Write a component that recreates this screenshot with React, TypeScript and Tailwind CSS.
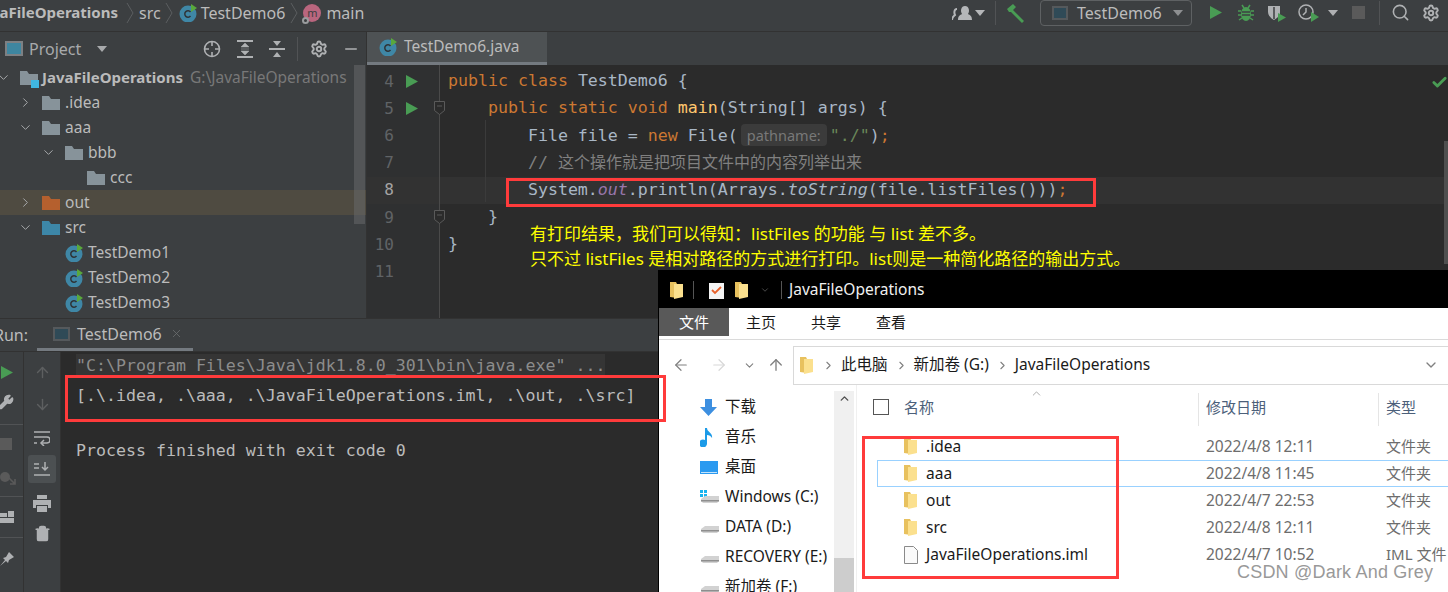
import { ArrowDown, ArrowLeft, ArrowRight, ArrowUp, Check, ChevronDown, ChevronRight, ChevronUp, Minus, Search, Settings, Trash2, Wrench, X } from "lucide-react"
import type { ReactNode } from "react"

const ui = "font-['Noto_Sans','Noto_Sans_CJK_SC',sans-serif]"
const mono = "font-['DejaVu_Sans_Mono','Noto_Sans_CJK_SC',monospace]"

function IdeFolder({ color = "#87939a" }: { color?: string }) {
  return (
    <svg width="18" height="15" viewBox="0 0 18 15" className="shrink-0">
      <path d="M0 1h7l2 3h9v11H0z" fill={color} />
    </svg>
  )
}

function ClassIcon() {
  return (
    <svg width="18" height="18" viewBox="0 0 18 18" className="shrink-0">
      <circle cx="9" cy="10" r="8.5" fill="#3f87a6" />
      <path d="M11.5 8a3.2 3.2 0 1 0 0 4" fill="none" stroke="#2f3437" strokeWidth="1.5" />
      <path d="M12 0l6 4-6 4z" fill="#59a83c" />
    </svg>
  )
}

function WinFolder() {
  return (
    <svg width="13" height="17" viewBox="0 0 13 17" className="shrink-0">
      <path d="M0 0h6l1 2v14l-7-1z" fill="#e8c15e" />
      <path d="M4 2h9v13l-9 2z" fill="#fbe08e" />
    </svg>
  )
}

function Drive({ showWin }: { showWin?: boolean }) {
  return (
    <svg width="20" height="16" viewBox="0 0 20 16" className="shrink-0">
      {showWin && <path d="M0 1h3v3H0zM4 1h3v3H4zM0 5h3v3H0zM4 5h3v3H4z" fill="#19b4f0" />}
      <path d="M1 10l4-3h14v5l-2 2H3l-2-2z" fill="#d2d2d2" />
      <path d="M1 11h18v1.5H1z" fill="#8e8e8e" />
    </svg>
  )
}

function RunIcon({ className = "" }: { className?: string }) {
  return (
    <svg width="14" height="15" viewBox="0 0 14 15" className={`shrink-0 ${className}`}>
      <path d="M1 1l12 6.5L1 14z" fill="#499c54" />
    </svg>
  )
}

function Caret({ color, className = "" }: { color: string; className?: string }) {
  return (
    <svg width="10" height="6" viewBox="0 0 10 6" className={`shrink-0 ${className}`}>
      <path d="M0 0h10L5 6z" fill={color} />
    </svg>
  )
}

function Crumb() {
  return (
    <svg width="9" height="22" viewBox="0 0 9 22" className="mx-[4.5px] shrink-0">
      <path d="M1 1l6 10-6 10" fill="none" stroke="#5b5e60" strokeWidth="1" />
    </svg>
  )
}

function Tree({ indent, arrow, name, icon, active }: {
  indent: string
  arrow?: "right" | "down"
  name: string
  icon: ReactNode
  active?: boolean
}) {
  return (
    <div className={`flex h-[25px] items-center ${indent} ${active ? "bg-[#4f4b41]" : ""}`}>
      <span className="flex w-[20px] shrink-0 text-[#a7a9ab]">
        {arrow === "right" && <ChevronRight size={15} strokeWidth={1.6} className="-ml-[4px]" />}
        {arrow === "down" && <ChevronDown size={15} strokeWidth={1.6} className="-ml-[4px]" />}
      </span>
      <span className="flex w-[23px] shrink-0">{icon}</span>
      <span className="whitespace-nowrap text-[#bbbbbb]">{name}</span>
    </div>
  )
}

function TopBar() {
  return (
    <header className={`flex h-[32px] shrink-0 items-center border-b border-[#323232] bg-[#3c3f41] pb-[6px] text-[16px] text-[#bbbbbb] ${ui}`}>
      <div className="flex flex-1 items-center overflow-hidden">
        <span className="-ml-[23px] mr-[3px] text-[15px] font-bold">JavaFileOperations</span>
        <Crumb />
        <span>src</span>
        <Crumb />
        <ClassIcon />
        <span className="ml-[4px]">TestDemo6</span>
        <Crumb />
        <span className="relative flex h-[18px] w-[18px] items-center justify-center rounded-full bg-[#b9667e] text-[11px] leading-none text-[#3c3f41]">
          m
          <span className="absolute -bottom-[2px] -left-[1px] h-[7px] w-[7px] rounded-full border-2 border-[#9a9c9e] bg-[#3c3f41]" />
        </span>
        <span className="ml-[5px]">main</span>
      </div>
      <div className="flex h-full items-center pr-[8px]">
        <svg width="21" height="16" viewBox="0 0 21 16" className="mr-[2px]">
          <path d="M0 15c0-3 2-4 3-5-1-2-1-6 2-6" fill="none" stroke="#b5b7b9" strokeWidth="2" />
          <path d="M6 15c0-4 2-5 4-6-2-3-1-8 3-8s5 5 3 8c2 1 4 2 4 6z" fill="#b5b7b9" />
        </svg>
        <Caret color="#b5b7b9" />
        <div className="ml-[10px] h-[24px] w-px bg-[#515355]" />
        <svg width="20" height="20" viewBox="0 0 20 20" className="ml-[10px]">
          <path d="M1 6l6-5 3 3-3 3 11 11-2 2L5 9 3 9z" fill="#499c54" />
        </svg>
        <div className="ml-[14px] flex h-[26px] w-[152px] items-center rounded-[4px] border border-[#5e6163] pl-[11px]">
          <span className="h-[14px] w-[16px] shrink-0 border-2 border-[#55595c] bg-[#2f4a57]" />
          <span className="ml-[9px]">TestDemo6</span>
          <Caret color="#8d8f91" className="ml-[11px]" />
        </div>
        <RunIcon className="ml-[17px]" />
        <svg width="16" height="18" viewBox="0 0 16 18" className="ml-[15px]">
          <ellipse cx="8" cy="10" rx="5" ry="7" fill="#499c54" />
          <path d="M4 1l2 3M12 1l-2 3M0 7h3M13 7h3M0 11h3M13 11h3M1 16l3-2M15 16l-3-2" stroke="#499c54" strokeWidth="1.5" />
          <path d="M4 8h8M4 11h8" stroke="#3c3f41" strokeWidth="1.4" />
        </svg>
        <svg width="20" height="18" viewBox="0 0 20 18" className="ml-[13px]">
          <path d="M1 2h12v6c0 4-3 6-6 8-3-2-6-4-6-8z" fill="#afb1b3" />
          <path d="M7 3v12" stroke="#3c3f41" strokeWidth="1.5" />
          <path d="M11 9l8 4.5-8 4.5z" fill="#499c54" />
        </svg>
        <svg width="22" height="20" viewBox="0 0 22 20" className="ml-[11px]">
          <circle cx="8" cy="9" r="7" fill="none" stroke="#afb1b3" strokeWidth="1.5" />
          <path d="M8 5v4l-3 3" fill="none" stroke="#afb1b3" strokeWidth="1.5" />
          <path d="M13 9l8 5-8 5z" fill="#499c54" />
        </svg>
        <Caret color="#afb1b3" className="ml-[8px]" />
        <div className="ml-[14px] h-[13px] w-[13px] bg-[#5a5a5a]" />
        <div className="ml-[14px] h-[24px] w-px bg-[#515355]" />
        <Search size={19} strokeWidth={2} className="ml-[11px] text-[#afb1b3]" />
        <Settings size={18} strokeWidth={2.6} className="ml-[12px] text-[#afb1b3]" />
      </div>
    </header>
  )
}

function ProjectPanel() {
  return (
    <aside className={`relative flex w-[367px] shrink-0 flex-col overflow-hidden border-r border-[#323232] bg-[#3c3f41] text-[15.5px] ${ui}`}>
      <div className="flex h-[33px] shrink-0 items-center text-[16px] text-[#a8aaac]">
        <span className="ml-[5px] h-[15px] w-[18px] shrink-0 border-2 border-[#7d8083] bg-[#3e86a0]" />
        <span className="ml-[6px]">Project</span>
        <Caret color="#a8aaac" className="ml-[16px]" />
        <svg width="18" height="18" viewBox="0 0 18 18" className="ml-[96px] shrink-0">
          <circle cx="9" cy="9" r="7.5" fill="none" stroke="#afb1b3" strokeWidth="1.6" />
          <path d="M9 1v5M9 12v5M1 9h5M12 9h5" stroke="#afb1b3" strokeWidth="1.6" />
        </svg>
        <svg width="16" height="18" viewBox="0 0 16 18" className="ml-[16px] shrink-0">
          <path d="M0 1h16M0 17h16" stroke="#afb1b3" strokeWidth="2" />
          <path d="M8 3l4 4H4zM8 15l-4-4h8zM4 9h8" fill="#afb1b3" stroke="#afb1b3" strokeWidth="0.5" />
        </svg>
        <svg width="16" height="18" viewBox="0 0 16 18" className="ml-[16px] shrink-0">
          <path d="M0 9h16" stroke="#afb1b3" strokeWidth="2" />
          <path d="M4 1h8L8 6zM4 17h8l-4-5z" fill="#afb1b3" />
        </svg>
        <div className="ml-[12px] h-[24px] w-px shrink-0 bg-[#515355]" />
        <Settings size={18} strokeWidth={2.6} className="ml-[12px] shrink-0 text-[#afb1b3]" />
        <Minus size={18} strokeWidth={2} className="ml-[14px] shrink-0 text-[#afb1b3]" />
      </div>
      <div className="flex h-[25px] items-center">
        <span className="flex w-[20px] shrink-0 text-[#a7a9ab]"><ChevronDown size={15} strokeWidth={1.6} className="-ml-[4px]" /></span>
        <span className="relative flex w-[22px] shrink-0">
          <IdeFolder />
          <span className="absolute -bottom-[3px] right-[3px] h-[8px] w-[8px] bg-[#40b6e0]" />
        </span>
        <span className="whitespace-nowrap text-[15px] font-bold text-[#bbbbbb]">JavaFileOperations</span>
        <span className="ml-[7px] whitespace-nowrap text-[#787878]">G:\JavaFileOperations</span>
      </div>
      <Tree indent="pl-[22px]" arrow="right" name=".idea" icon={<IdeFolder />} />
      <Tree indent="pl-[22px]" arrow="down" name="aaa" icon={<IdeFolder />} />
      <Tree indent="pl-[45px]" arrow="down" name="bbb" icon={<IdeFolder />} />
      <Tree indent="pl-[67px]" name="ccc" icon={<IdeFolder />} />
      <Tree indent="pl-[22px]" arrow="right" name="out" icon={<IdeFolder color="#b5602e" />} active />
      <Tree indent="pl-[22px]" arrow="down" name="src" icon={<IdeFolder color="#3d87a8" />} />
      <Tree indent="pl-[45px]" name="TestDemo1" icon={<ClassIcon />} />
      <Tree indent="pl-[45px]" name="TestDemo2" icon={<ClassIcon />} />
      <Tree indent="pl-[45px]" name="TestDemo3" icon={<ClassIcon />} />
      <div className="absolute right-[1px] top-[33px] h-[159px] w-[11px] bg-[#6a6c6d]/50" />
    </aside>
  )
}

function Line({ n, run, fold, current, children }: { n: number; run?: boolean; fold?: boolean; current?: boolean; children?: ReactNode }) {
  return (
    <div className={`flex h-[27.2px] items-center ${current ? "bg-[#323232]" : ""}`}>
      <div className={`relative flex h-full w-[73px] shrink-0 items-center border-r border-[#4a4a4a] ${current ? "bg-[#323232]" : "bg-[#2f3031]"}`}>
        <span className={`w-[27px] text-right ${current ? "text-[#a4a3a3]" : "text-[#606366]"}`}>{n}</span>
        {run && <RunIcon className="ml-[11px]" />}
        {fold && (
          <svg width="11" height="15" viewBox="0 0 11 15" className="absolute -right-[6px] top-[6px]">
            <path d="M.5.5h10v9l-5 4-5-4z" fill="#2b2b2b" stroke="#5a5a5a" />
            <path d="M3 5h5" stroke="#5a5a5a" />
          </svg>
        )}
      </div>
      <pre className={`ml-[8px] ${mono} text-[16.6px] text-[#a9b7c6]`}>{children}</pre>
    </div>
  )
}

function Editor() {
  const kw = "text-[#cc7832]"
  return (
    <section className="relative flex min-w-0 flex-1 flex-col bg-[#2b2b2b]">
      <div className="flex h-[33px] shrink-0 bg-[#3c3f41]">
        <div className={`flex w-[180px] items-center border-b-[3px] border-[#747a80] bg-[#4e5254] pl-[12px] text-[15.5px] text-[#bbbbbb] ${ui}`}>
          <ClassIcon />
          <span className="ml-[7px]">TestDemo6.java</span>
        </div>
      </div>
      <div className={`flex min-h-0 flex-1 flex-col text-[16px] ${mono}`}>
        <div className="h-[3px] w-[73px] shrink-0 border-r border-[#4a4a4a] bg-[#2f3031]" />
        <Line n={4} run><span className={kw}>public class </span>TestDemo6 {"{"}</Line>
        <Line n={5} run fold>    <span className={kw}>public static void </span><span className="text-[#ffc66d]">main</span>(String[] args) {"{"}</Line>
        <Line n={6}>        File file = <span className={kw}>new </span>File(<span className={`mx-[3px] rounded-[4px] bg-[#3b3b3b] px-[6px] py-[1px] text-[14.5px] text-[#787878] ${ui}`}>pathname:</span><span className="text-[#6a8759]">"./"</span>)<span className={kw}>;</span></Line>
        <Line n={7}><span className="text-[#808080]">        // <span className="text-[16px]">这个操作就是把项目文件中的内容列举出来</span></span></Line>
        <Line n={8} current>        System.<span className="italic text-[#9876aa]">out</span>.println(Arrays.<span className="italic">toString</span>(file.listFiles()))<span className={kw}>;</span></Line>
        <Line n={9} fold>    {"}"}</Line>
        <Line n={10}>{"}"}</Line>
        <Line n={11} />
        <div className="w-[73px] flex-1 border-r border-[#4a4a4a] bg-[#2f3031]" />
      </div>
      <div className="absolute left-[118px] top-[88px] h-[82px] w-px bg-[#3b3b3b]" />
      <Check size={17} strokeWidth={4} className="absolute right-0 top-[42px] text-[#499c54]" />
      <div className="absolute right-0 top-[109px] h-[123px] w-[4px] bg-[#4f4f4f]" />
    </section>
  )
}

function RunPanel() {
  return (
    <section className="flex min-h-0 flex-1 flex-col border-t border-[#323232] bg-[#3c3f41]">
      <div className={`flex h-[33px] shrink-0 items-center border-b border-[#323232] text-[16px] text-[#bbbbbb] ${ui}`}>
        <span className="-ml-[6px]">Run:</span>
        <div className="ml-[9px] flex h-full w-[156px] items-center border-b-[3px] border-[#747a80] pl-[16px]">
          <span className="h-[14px] w-[17px] shrink-0 border-2 border-[#55595c] bg-[#2f4a57]" />
          <span className="ml-[7px]">TestDemo6</span>
          <X size={13} strokeWidth={1.4} className="ml-[8px] text-[#6e7072]" />
        </div>
      </div>
      <div className="flex min-h-0 flex-1">
        <div className="flex w-[24px] shrink-0 flex-col overflow-hidden border-r border-[#323232] pt-[5px] text-[#afb1b3]">
          <div className="flex h-[30px] shrink-0 items-center"><RunIcon /></div>
          <div className="flex h-[30px] shrink-0 items-center"><Wrench size={16} fill="#afb1b3" className="-ml-[2px]" /></div>
          <div className="mt-[7px] h-px w-full shrink-0 bg-[#515355]" />
          <div className="flex h-[38px] shrink-0 items-center"><div className="h-[12px] w-[12px] bg-[#5a5a5a]" /></div>
          <div className="flex h-[28px] shrink-0 items-center">
            <svg width="16" height="16" viewBox="0 0 16 16">
              <circle cx="5" cy="8" r="5" fill="#5a5a5a" />
              <path d="M9 9l6 6M15 10v5h-5" fill="none" stroke="#5a5a5a" strokeWidth="1.6" />
            </svg>
          </div>
          <div className="mt-[5px] h-px w-full shrink-0 bg-[#515355]" />
          <div className="flex h-[40px] shrink-0 items-center">
            <svg width="14" height="13" viewBox="0 0 14 13"><path d="M0 2h7v4H0zM8 0h6v6H8zM0 7h14v5H0z" fill="#afb1b3" /></svg>
          </div>
          <div className="h-px w-full shrink-0 bg-[#515355]" />
          <div className="flex h-[40px] shrink-0 items-center">
            <svg width="15" height="15" viewBox="0 0 15 15"><path d="M0 15l5-6-2-2 3-1 3-5 5 5-5 3-1 3-2-2z" fill="#afb1b3" /></svg>
          </div>
        </div>
        <div className="flex w-[37px] shrink-0 flex-col items-center border-r border-[#323232] pt-[5px] text-[#afb1b3]">
          <div className="flex h-[30px] shrink-0 items-center"><ArrowUp size={17} className="text-[#5d5f60]" /></div>
          <div className="flex h-[34px] shrink-0 items-center"><ArrowDown size={17} className="text-[#5d5f60]" /></div>
          <div className="flex h-[34px] shrink-0 items-center">
            <svg width="16" height="16" viewBox="0 0 16 16" fill="none" stroke="#afb1b3" strokeWidth="1.5">
              <path d="M0 2h16M0 7h13a2.5 2.5 0 0 1 0 6H8M0 13h3" />
              <path d="M10 10l-3 3 3 3" />
            </svg>
          </div>
          <div className="flex h-[28px] w-[28px] shrink-0 items-center justify-center rounded-[3px] bg-[#4c5052]">
            <svg width="16" height="14" viewBox="0 0 16 14" fill="none" stroke="#afb1b3" strokeWidth="1.5">
              <path d="M0 2h5M0 6h5M0 13h16M11 0v8M8 5l3 3 3-3" />
            </svg>
          </div>
          <div className="mt-[5px] flex h-[30px] shrink-0 items-center">
            <svg width="18" height="17" viewBox="0 0 18 17"><path d="M4 0h10v4H4zM0 5h18v8h-3v-3H3v3H0zM4 11h10v6H4z" fill="#afb1b3" /></svg>
          </div>
          <div className="flex h-[30px] shrink-0 items-center"><Trash2 size={17} strokeWidth={2.2} fill="#afb1b3" /></div>
        </div>
        <div className={`flex-1 bg-[#2b2b2b] pl-[15px] pt-[2px] text-[16.6px] leading-[27.5px] text-[#bbbbbb] ${mono}`}>
          <div className="w-[529px] whitespace-pre bg-[#353535] leading-[24px] text-[#8c8c8c]">"C:\Program Files\Java\jdk1.8.0_301\bin\java.exe" ...</div>
          <div className="mt-[4px] h-[27.5px] whitespace-pre">[.\.idea, .\aaa, .\JavaFileOperations.iml, .\out, .\src]</div>
          <div className="h-[27.5px]" />
          <div className="whitespace-pre">Process finished with exit code 0</div>
        </div>
      </div>
    </section>
  )
}

function NavItem({ icon, label }: { icon: ReactNode; label: string }) {
  return (
    <div className="flex h-[30px] items-center text-[15.5px] text-[#1a1a1a]">
      <span className="flex w-[25px] shrink-0 justify-start">{icon}</span>
      <span className="whitespace-nowrap">{label}</span>
    </div>
  )
}

function FileRow({ name, date, type, icon, selected }: { name: string; date: string; type: string; icon: ReactNode; selected?: boolean }) {
  return (
    <div className={`ml-[20px] flex h-[27px] items-center text-[15.5px] ${selected ? "border border-r-0 border-[#99d1ff] pl-[26px]" : "pl-[27px]"}`}>
      <span className="flex w-[22px] shrink-0">{icon}</span>
      <span className="w-[280px] shrink-0 whitespace-nowrap text-[#1a1a1a]">{name}</span>
      <span className="w-[180px] shrink-0 whitespace-nowrap text-[#6d6d6d]">{date}</span>
      <span className="whitespace-nowrap text-[15px] text-[#6d6d6d]">{type}</span>
    </div>
  )
}

function Explorer() {
  return (
    <div className={`absolute left-[658px] top-[270px] flex h-[322px] w-[790px] flex-col overflow-hidden border-l border-black bg-white ${ui}`}>
      <div className="flex h-[38px] shrink-0 items-center bg-black pl-[11px] pt-[2px] text-[15.5px] text-[#f0f0f0]">
        <WinFolder />
        <div className="ml-[10px] h-[18px] w-px bg-[#555555]" />
        <svg width="15" height="17" viewBox="0 0 15 17" className="ml-[15px]">
          <path d="M0 1h15v16H0z" fill="#f4f4f4" />
          <path d="M3 8l3 3 6-6" fill="none" stroke="#e8622c" strokeWidth="1.8" />
        </svg>
        <span className="ml-[11px] flex"><WinFolder /></span>
        <ChevronDown size={10} strokeWidth={1.5} className="ml-[12px] text-[#777777]" />
        <div className="ml-[11px] h-[18px] w-px bg-[#555555]" />
        <span className="ml-[7px]">JavaFileOperations</span>
      </div>
      <div className="flex h-[28px] shrink-0 items-center text-[15px] text-[#1a1a1a]">
        <span className="flex h-full w-[70px] items-center justify-center bg-[#595959] text-white">文件</span>
        <span className="ml-[17px]">主页</span>
        <span className="ml-[35px]">共享</span>
        <span className="ml-[35px]">查看</span>
      </div>
      <div className="mt-[3px] flex h-[46px] shrink-0 items-center border-t border-[#dadada] pl-[13px] pt-[5px] text-[15.5px] text-[#1a1a1a]">
        <ArrowLeft size={18} strokeWidth={1.6} className="text-[#808080]" />
        <ArrowRight size={18} strokeWidth={1.6} className="ml-[20px] text-[#d8d8d8]" />
        <ChevronDown size={13} strokeWidth={2} className="ml-[15px] text-[#808080]" />
        <ArrowUp size={18} strokeWidth={1.8} className="ml-[11px] text-[#808080]" />
        <div className="ml-[8px] flex h-[39px] flex-1 items-center border border-r-0 border-[#d9d9d9] pl-[6px]">
          <WinFolder />
          <ChevronRight size={13} strokeWidth={2} className="ml-[9px] text-[#808080]" />
          <span className="ml-[6px]">此电脑</span>
          <ChevronRight size={13} strokeWidth={2} className="ml-[7px] text-[#808080]" />
          <span className="ml-[6px]">新加卷 (G:)</span>
          <ChevronRight size={13} strokeWidth={2} className="ml-[7px] text-[#808080]" />
          <span className="ml-[6px]">JavaFileOperations</span>
          <ChevronDown size={16} strokeWidth={2} className="ml-auto mr-[9px] text-[#808080]" />
        </div>
      </div>
      <div className="flex min-h-0 flex-1">
        <div className="w-[175px] shrink-0 overflow-hidden pl-[41px] pt-[7px]">
          <NavItem label="下载" icon={<svg width="17" height="17" viewBox="0 0 17 17"><path d="M5 0h7v8h5l-8.5 9L0 8h5z" fill="#3d8fe0" /></svg>} />
          <NavItem label="音乐" icon={<svg width="15" height="19" viewBox="0 0 15 19"><path d="M5 0h2c0 4 6 5 5 10-1-2-3-3-5-3v8a4 4 0 1 1-2-3z" fill="#1c9be8" /></svg>} />
          <NavItem label="桌面" icon={<svg width="18" height="13" viewBox="0 0 18 13"><path d="M0 0h18v13H0z" fill="#2b9af0" /><path d="M1 11h16v1H1z" fill="#c5e4fb" /></svg>} />
          <NavItem label="Windows (C:)" icon={<Drive showWin />} />
          <NavItem label="DATA (D:)" icon={<Drive />} />
          <NavItem label="RECOVERY (E:)" icon={<Drive />} />
          <NavItem label="新加卷 (F:)" icon={<Drive />} />
        </div>
        <div className="mt-[6px] flex w-[20px] shrink-0 flex-col bg-[#f0f0f0]">
          <div className="flex h-[14px] items-center justify-center"><ChevronUp size={13} strokeWidth={2.6} className="text-[#505050]" /></div>
          <div className="mt-[153px] flex-1 bg-[#cdcdcd]" />
        </div>
        <div className="ml-[2px] flex min-w-0 flex-1 flex-col border-l border-[#f0f0f0]">
          <div className="relative flex h-[48px] shrink-0 items-center pb-[4px] pl-[16px] text-[15px] text-[#4c607a]">
            <span className="h-[16px] w-[16px] shrink-0 border border-[#555555]" />
            <span className="ml-[15px] w-[294px] shrink-0">名称</span>
            <span className="mt-[5px] h-[33px] w-px shrink-0 bg-[#e5e5e5]" />
            <span className="ml-[7px] w-[172px] shrink-0">修改日期</span>
            <span className="mt-[5px] h-[33px] w-px shrink-0 bg-[#e5e5e5]" />
            <span className="ml-[7px]">类型</span>
            <ChevronUp size={13} strokeWidth={1.2} className="absolute left-[173px] top-[2px] text-[#808080]" />
          </div>
          <FileRow name=".idea" date="2022/4/8 12:11" type="文件夹" icon={<WinFolder />} />
          <FileRow name="aaa" date="2022/4/8 11:45" type="文件夹" icon={<WinFolder />} selected />
          <FileRow name="out" date="2022/4/7 22:53" type="文件夹" icon={<WinFolder />} />
          <FileRow name="src" date="2022/4/8 12:11" type="文件夹" icon={<WinFolder />} />
          <FileRow
            name="JavaFileOperations.iml"
            date="2022/4/7 10:52"
            type="IML 文件"
            icon={
              <svg width="14" height="18" viewBox="0 0 14 18">
                <path d="M.5.5h9l4 4v13H.5z" fill="#fafafa" stroke="#8a8a8a" />
              </svg>
            }
          />
        </div>
      </div>
    </div>
  )
}

export default function App() {
  return (
    <div className="relative flex h-[592px] w-[1448px] flex-col overflow-hidden bg-[#3c3f41]">
      <TopBar />
      <div className="flex h-[286px] shrink-0">
        <ProjectPanel />
        <Editor />
      </div>
      <RunPanel />

      <div className={`absolute left-[530px] top-[221px] text-[17px] leading-[25px] text-[#ffff00] ${ui}`}>
        <p>有打印结果，我们可以得知：listFiles 的功能 与 list 差不多。</p>
        <p>只不过 listFiles 是相对路径的方式进行打印。list则是一种简化路径的输出方式。</p>
      </div>

      <Explorer />

      <div className="absolute left-[506px] top-[178px] h-[29px] w-[590px] border-[3px] border-[#ff3b3b]" />
      <div className="absolute left-[65px] top-[375px] h-[47px] w-[601px] border-[3px] border-[#ff3b3b]" />
      <div className="absolute left-[862px] top-[436px] h-[143px] w-[257px] border-[3px] border-[#ff3b3b]" />

      <div className="absolute left-[1237px] top-[560px] font-['Liberation_Sans',sans-serif] text-[18px] leading-[24px] tracking-[0.2px] text-[#999999]">
        CSDN @Dark And Grey
      </div>
    </div>
  )
}
